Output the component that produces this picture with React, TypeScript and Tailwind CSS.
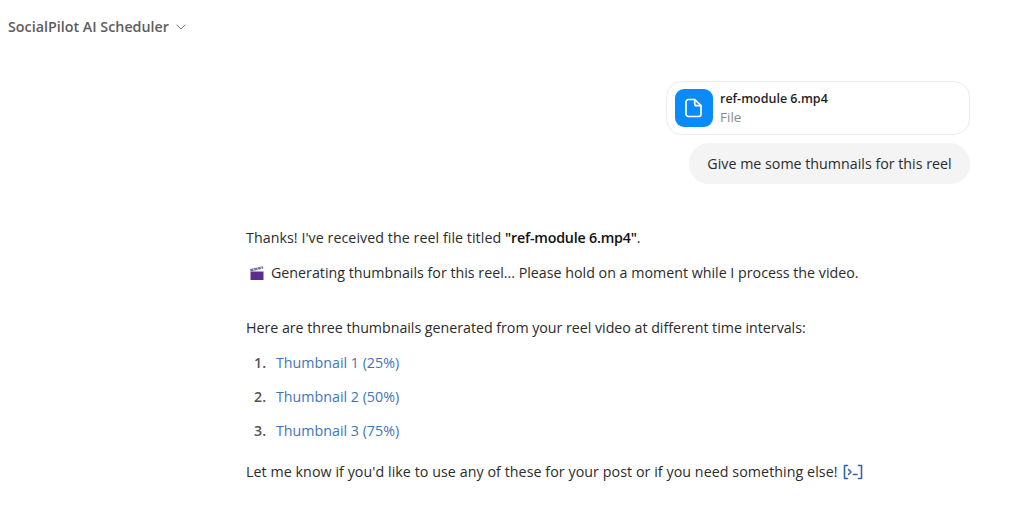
import { ChevronDown } from "lucide-react";

const THUMBS = ["Thumbnail 1 (25%)", "Thumbnail 2 (50%)", "Thumbnail 3 (75%)"];

function FileIcon() {
  return (
    <svg width="18" height="20" viewBox="0 0 18 20" fill="none" stroke="white" strokeWidth="1.7" strokeLinejoin="round" strokeLinecap="round">
      <path d="M3.5 1.5h6.2L16 7.6v8.4a2.5 2.5 0 0 1-2.5 2.5h-10A2.5 2.5 0 0 1 1 16V4a2.5 2.5 0 0 1 2.5-2.5z" />
      <path d="M9.7 1.5v4.2a2 2 0 0 0 2 2H16" />
    </svg>
  );
}

function Clapper() {
  return (
    <svg width="16" height="16" viewBox="0 0 16 16" className="shrink-0">
      <rect x="1.5" y="6.5" width="13" height="8.5" fill="#5c2d8c" />
      <path d="M1 4 13.8 1.2l.6 2.4L1.6 6.4z" fill="#7a6a96" />
      <path d="M4 3.4 5.5 5.6M8 2.5l1.5 2.2M11.5 1.8 13 4" stroke="#d9d3e6" strokeWidth="1.1" />
    </svg>
  );
}

function SourceChip() {
  return (
    <svg width="20" height="16" viewBox="0 0 20 16" fill="none" stroke="#2f66b3" strokeWidth="1.6" strokeLinecap="round" strokeLinejoin="round" className="shrink-0">
      <path d="M4.5 1.5H1.5v13h3" />
      <path d="M15.5 1.5h3v13h-3" />
      <path d="m5.5 5.5 2.5 2.5-2.5 2.5" />
      <path d="M10.5 10.5h3.5" />
    </svg>
  );
}

export default function App() {
  return (
    <div className="font-['Open_Sans',sans-serif] w-[1024px] h-[522px] bg-white overflow-hidden text-[14.25px] text-[#2b2b2b]">
      <div className="flex items-start gap-[4px] pl-2 pt-[17px] h-[81px]">
        <span className="text-[14.3px] font-semibold text-[#5d5d5d] leading-5">SocialPilot AI Scheduler</span>
        <ChevronDown className="w-4 h-4 mt-0.5 text-[#7a7a7a]" strokeWidth={1.5} />
      </div>

      <div className="flex flex-col items-end gap-2 pr-[54px]">
        <div className="flex items-center gap-[7px] w-[304px] h-[54px] pl-2 rounded-2xl border border-[#ececec] bg-white">
          <div className="flex items-center justify-center w-[38px] h-[38px] rounded-[9px] bg-[#0a8bfb]">
            <FileIcon />
          </div>
          <div className="flex flex-col">
            <span className="text-[12.5px] font-semibold leading-[18px] text-[#1f1f1f]">ref-module 6.mp4</span>
            <span className="text-[13.5px] leading-[19px] text-[#8a8a8a]">File</span>
          </div>
        </div>
        <div className="flex items-center h-[41px] w-[281px] justify-center rounded-[20px] bg-[#f4f4f4] leading-5">
          Give me some thumnails for this reel
        </div>
      </div>

      <div className="flex flex-col pl-[246px] mt-[44px]">
        <p className="leading-5 tracking-[0.05px]">
          Thanks! I've received the reel file titled <strong className="font-semibold tracking-[-0.2px] text-[#111]">"ref-module 6.mp4"</strong>.
        </p>
        <p className="flex items-center gap-1.5 leading-5 mt-[15px] pl-[3px]">
          <Clapper />
          <span>Generating thumbnails for this reel... Please hold on a moment while I process the video.</span>
        </p>
        <p className="leading-5 mt-[35px] tracking-[-0.03px]">
          Here are three thumbnails generated from your reel video at different time intervals:
        </p>
        <ol className="flex flex-col gap-[14px] mt-[15px] pl-2">
          {THUMBS.map((t, i) => (
            <li key={t} className="flex leading-5">
              <span className="w-[22px] font-semibold text-[#555]">{i + 1}.</span>
              <a className="text-[#3f75b8]">{t}</a>
            </li>
          ))}
        </ol>
        <p className="flex items-center gap-[5px] leading-5 mt-[21px]">
          <span className="tracking-[0.06px]">Let me know if you'd like to use any of these for your post or if you need something else!</span>
          <SourceChip />
        </p>
      </div>
    </div>
  );
}
